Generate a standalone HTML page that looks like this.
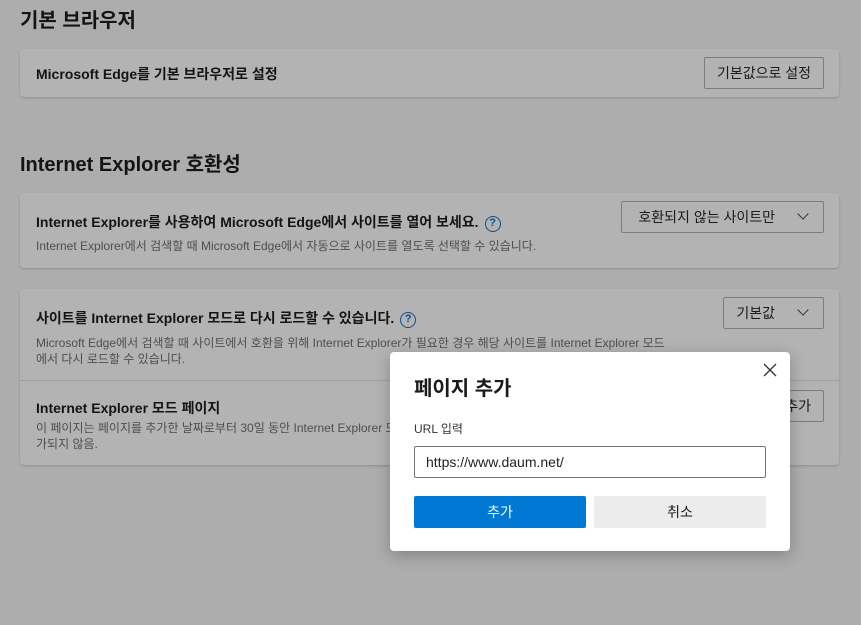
<!DOCTYPE html>
<html><head><meta charset="utf-8"><style>
*{box-sizing:border-box;margin:0;padding:0}
body{width:861px;height:625px;background:#adadad;font-family:"Liberation Sans","Noto Sans CJK KR",sans-serif;position:relative;overflow:hidden;color:#141414}
.h{position:absolute;left:20px;font-size:20px;font-weight:bold}
.card{position:absolute;left:20px;width:819px;background:#b3b3b3;border-radius:4px;box-shadow:0 1px 2px rgba(0,0,0,.18)}
.t{position:absolute;left:16px;font-size:14px;font-weight:bold}
.s{position:absolute;left:16px;font-size:12px;color:#4e4e4e;line-height:16px;white-space:nowrap}
.btn{position:absolute;border:1px solid #7d7d7d;border-radius:2px;font-size:14px;height:32px;line-height:30px;padding:0 12px;color:#1a1a1a}
.q{display:inline-block;width:16px;height:16px;border:1.5px solid #0a4f8a;border-radius:50%;color:#0a4f8a;font-size:11px;text-align:center;line-height:13px;font-weight:bold;vertical-align:1px;margin-left:6px}
.chev{display:inline-block;width:8px;height:8px;border-right:1.3px solid #333;border-bottom:1.3px solid #333;transform:rotate(45deg);margin-left:24px;margin-right:4px;vertical-align:4px}
.dlg{position:absolute;left:390px;top:352px;width:400px;height:199px;background:#fff;border-radius:4px;box-shadow:0 4px 16px rgba(0,0,0,.25)}
</style></head><body>
<div class="h" style="top:4px">기본 브라우저</div>
<div class="card" style="top:49px;height:48px">
<div class="t" style="top:15px">Microsoft Edge를 기본 브라우저로 설정</div>
<div class="btn" style="right:15px;top:8px">기본값으로 설정</div>
</div>
<div class="h" style="top:148px">Internet Explorer 호환성</div>
<div class="card" style="top:193px;height:75px">
<div class="t" style="top:19px">Internet Explorer를 사용하여 Microsoft Edge에서 사이트를 열어 보세요.<span class="q">?</span></div>
<div class="s" style="top:45px">Internet Explorer에서 검색할 때 Microsoft Edge에서 자동으로 사이트를 열도록 선택할 수 있습니다.</div>
<div class="btn" style="right:15px;top:8px;padding-left:16px">호환되지 않는 사이트만<span class="chev"></span></div>
</div>
<div class="card" style="top:289px;height:176px">
<div class="t" style="top:19px">사이트를 Internet Explorer 모드로 다시 로드할 수 있습니다.<span class="q">?</span></div>
<div class="s" style="top:46px">Microsoft Edge에서 검색할 때 사이트에서 호환을 위해 Internet Explorer가 필요한 경우 해당 사이트를 Internet Explorer 모드<br>에서 다시 로드할 수 있습니다.</div>
<div class="btn" style="right:15px;top:8px">기본값<span class="chev"></span></div>
<div style="position:absolute;left:0;right:0;top:91px;border-top:1px solid #9f9f9f"></div>
<div class="t" style="top:109px">Internet Explorer 모드 페이지</div>
<div class="s" style="top:131px">이 페이지는 페이지를 추가한 날짜로부터 30일 동안 Internet Explorer 모드에서 열립니다. 목록에 추<br>가되지 않음.</div>
<div class="btn" style="right:15px;top:101px">추가</div>
</div>
<div class="dlg">
<svg style="position:absolute;left:373px;top:11px" width="14" height="14"><path d="M1 1L13 13M13 1L1 13" stroke="#333" stroke-width="1.3"/></svg>
<div style="position:absolute;left:24px;top:20px;font-size:20px;font-weight:bold;color:#1a1a1a">페이지 추가</div>
<div style="position:absolute;left:24px;top:68px;font-size:12px;color:#333">URL 입력</div>
<div style="position:absolute;left:24px;top:94px;width:352px;height:32px;border:1px solid #767676;border-radius:2px;font-size:14px;line-height:30px;padding-left:11px;color:#222">https://www.daum.net/</div>
<div style="position:absolute;left:24px;top:144px;width:172px;height:32px;background:#0078d4;border-radius:2px;color:#fff;font-size:14px;text-align:center;line-height:32px">추가</div>
<div style="position:absolute;left:204px;top:144px;width:172px;height:32px;background:#ececec;border-radius:2px;color:#1a1a1a;font-size:14px;text-align:center;line-height:32px">취소</div>
</div>
</body></html>
